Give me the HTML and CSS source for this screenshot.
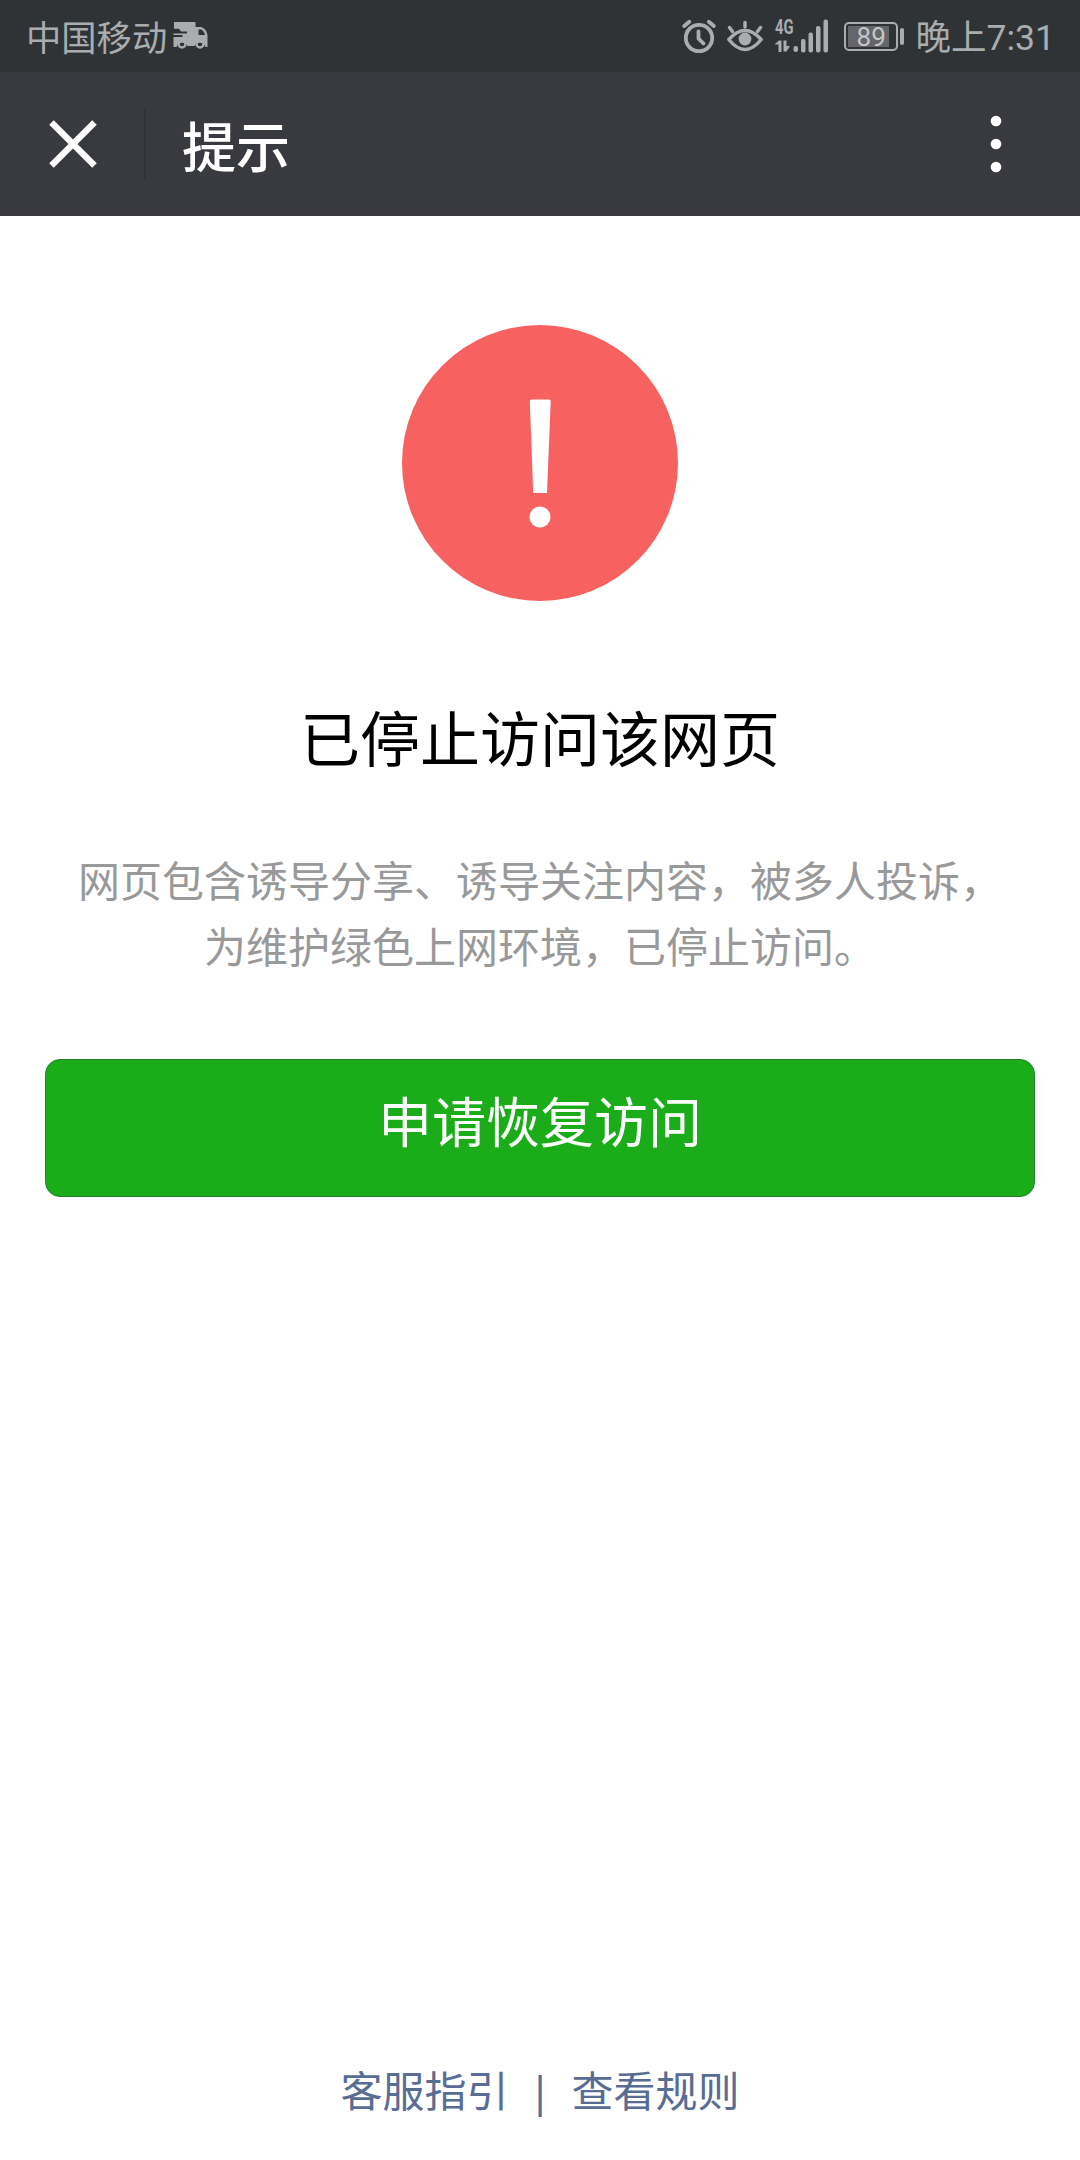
FILE: index.html
```html
<!DOCTYPE html>
<html lang="zh-CN">
<head>
    <meta charset="UTF-8">
    <meta name="viewport" content="width=device-width, initial-scale=1.0">
    <title>提示</title>
    <link rel="stylesheet" href="styles.css">
</head>
<body>
    <div class="page">
        <div class="status-bar">
            <span class="carrier">中国移动</span>
            <svg class="truck" width="36" height="30" viewBox="0 0 36 30">
                <path fill="#a9adaf" d="M1 1H22.500V6H28Q33 7 34.500 14V26H32.500A6 6 0 0 0 21.500 25H14.500A6 6 0 0 0 3.500 26H.5V16H9.500V14H.5V12.500H14V10.500H8L6 7.800H1Z"/>
                <path fill="#2f3336" d="M25.500 8.500H28Q31 9.500 32 14H25.500Z"/>
                <circle cx="9" cy="23" r="3.500" fill="none" stroke="#a9adaf" stroke-width="2.400"/>
                <circle cx="27" cy="23" r="3.500" fill="none" stroke="#a9adaf" stroke-width="2.400"/>
            </svg>

            <div class="indicators">
                <svg class="alarm" width="36" height="36" viewBox="0 0 36 36" fill="none" stroke="#a9adaf" stroke-width="3.800" stroke-linecap="round">
                    <circle cx="18" cy="20" r="13.200"/>
                    <path d="M17.500 13.500V20.500L22.500 25.500M3.200 8L8.300 3.800M27.800 3.800L32.900 8"/>
                </svg>
                <svg class="eye" width="38" height="36" viewBox="0 0 38 36" fill="none" stroke="#a9adaf" stroke-width="3.500" stroke-linecap="round">
                    <path d="M2.800 21.500Q19 3.500 35.200 21.500Q19 41.500 2.800 21.500Z" stroke-linejoin="round"/>
                    <path d="M19 9V4.500M6.500 13.500L3.500 9.500M31.500 13.500L34.500 9.500"/>
                    <circle cx="19" cy="21" r="6.400" fill="#a9adaf" stroke="none"/>
                </svg>
                <svg class="signal" width="55" height="36" viewBox="0 0 55 36" fill="#a9adaf">
                    <text class="network" x="0" y="15.500" textLength="18.500" lengthAdjust="spacingAndGlyphs">4G</text>
                    <path d="M0 26L4 22.500H6.500V34H3.500V26.500H0ZM8.500 22.500H11.500V28H15L11.500 33.500H8.500Z"/>
                    <rect x="18.500" y="28" width="4.500" height="6" rx="2"/>
                    <rect x="26" y="21" width="4.500" height="13.500" rx="2"/>
                    <rect x="33.500" y="14.500" width="4.500" height="20" rx="2"/>
                    <rect x="41" y="8" width="4.500" height="26.500" rx="2"/>
                    <rect x="48.500" y="1.500" width="4.500" height="33" rx="2"/>
                </svg>
                <div class="battery"><span class="level">89</span></div>
                <span class="clock">晚上7:31</span>
            </div>
        </div>

        <div class="nav-bar">
            <svg class="close" width="48" height="48" viewBox="0 0 48 48">
                <path d="M2.500 2.500L45.500 45.500M45.500 2.500L2.500 45.500" stroke="#fff" stroke-width="6.400"/>
            </svg>
            <div class="divider"></div>
            <h1 class="title">提示</h1>
            <svg class="more" width="12" height="58" viewBox="0 0 12 58" fill="#fff">
                <circle cx="6" cy="6" r="5.300"/>
                <circle cx="6" cy="29" r="5.300"/>
                <circle cx="6" cy="52" r="5.300"/>
            </svg>
        </div>

        <div class="content">
            <svg class="warn" width="276" height="276" viewBox="0 0 276 276">
                <circle cx="138" cy="138" r="138" fill="#f76260"/>
                <path fill="#fff" d="M129.500 74.500H147Q148.800 74.500 148.700 76.300L145 168H131.200L127.800 76.300Q127.700 74.500 129.500 74.500Z"/>
                <circle cx="138" cy="192" r="10.500" fill="#fff"/>
            </svg>
            <h2 class="heading">已停止访问该网页</h2>
            <p class="desc">网页包含诱导分享、诱导关注内容，被多人投诉，<br>为维护绿色上网环境，已停止访问。</p>
            <a class="btn" href="#">申请恢复访问</a>
        </div>

        <div class="footer">
            <a href="#">客服指引</a>
            <span class="bar">|</span>
            <a href="#">查看规则</a>
        </div>
    </div>
</body>
</html>
```

FILE: styles.css
```css
* {
    box-sizing: border-box;
}
body {
    margin: 0;
    background-color: #fff;
    font-family: "Noto Sans CJK SC", sans-serif;
}
a {
    text-decoration: none;
}
svg {
    display: block;
    flex: none;
    overflow: visible;
}
.page {
    display: flex;
    flex-direction: column;
    height: 2160px;
}

/* status bar */
.status-bar {
    display: flex;
    align-items: center;
    height: 72px;
    padding: 0 25px 0 26px;
    background-color: #2f3336;
    color: #a9adaf;
    font-size: 35.300px;
    line-height: 70px;
}
.truck {
    margin-left: 6px;
}
.indicators {
    display: flex;
    align-items: center;
    margin-left: auto;
}
.eye {
    margin-left: 9px;
}
.signal {
    margin-left: 11px;
}
.network {
    font-family: Roboto, sans-serif;
    font-size: 20px;
    font-weight: 700;
}
.battery {
    position: relative;
    display: flex;
    width: 54px;
    height: 29px;
    margin-left: 14px;
    padding: 2px;
    border: 2px solid #a9adaf;
    border-radius: 5px;
}
.battery::after {
    content: "";
    position: absolute;
    top: 4px;
    right: -8px;
    width: 4px;
    height: 17px;
    border-radius: 2px;
    background-color: #a9adaf;
}
.level {
    width: 41px;
    padding-left: 9px;
    background-color: #66656a;
    color: #c3c6c8;
    font-family: Roboto, sans-serif;
    font-size: 26px;
    line-height: 22px;
}
.clock {
    margin-left: 18px;
    padding-top: 4px;
    font-family: Roboto, "Noto Sans CJK SC", sans-serif;
    font-size: 35.500px;
}

/* title bar */
.nav-bar {
    display: flex;
    align-items: center;
    height: 144px;
    padding: 1px 78px 0 49px;
    background-color: #393a3f;
    border-bottom: 1px solid #38363b;
}
.divider {
    width: 2px;
    height: 74px;
    margin-left: 47px;
    background-color: #323337;
}
.title {
    margin: 1px 0 0 36px;
    color: #fff;
    font-size: 54px;
    font-weight: 500;
    line-height: 80px;
}
.more {
    margin-left: auto;
}

/* message */
.content {
    display: flex;
    flex-direction: column;
    align-items: center;
    padding: 109px 45px 0;
    text-align: center;
}
.heading {
    margin: 90px 0 0;
    color: #000;
    font-size: 60px;
    font-weight: 400;
    line-height: 90px;
}
.desc {
    margin: 65px 0 0;
    color: #999;
    font-size: 42px;
    line-height: 66px;
    white-space: nowrap;
}
.btn {
    width: 990px;
    height: 138px;
    margin-top: 81px;
    border: 1px solid #2b7f2b;
    border-radius: 15px;
    background-color: #1aad19;
    color: #fff;
    font-size: 54px;
    line-height: 120px;
}

/* bottom links */
.footer {
    display: flex;
    justify-content: center;
    align-items: baseline;
    gap: 20px;
    margin-top: auto;
    padding-bottom: 38px;
    color: #586c94;
    font-size: 42px;
    line-height: 62px;
}
.footer a {
    color: #586c94;
}
.bar {
    font-family: "Noto Sans", sans-serif;
}
```
